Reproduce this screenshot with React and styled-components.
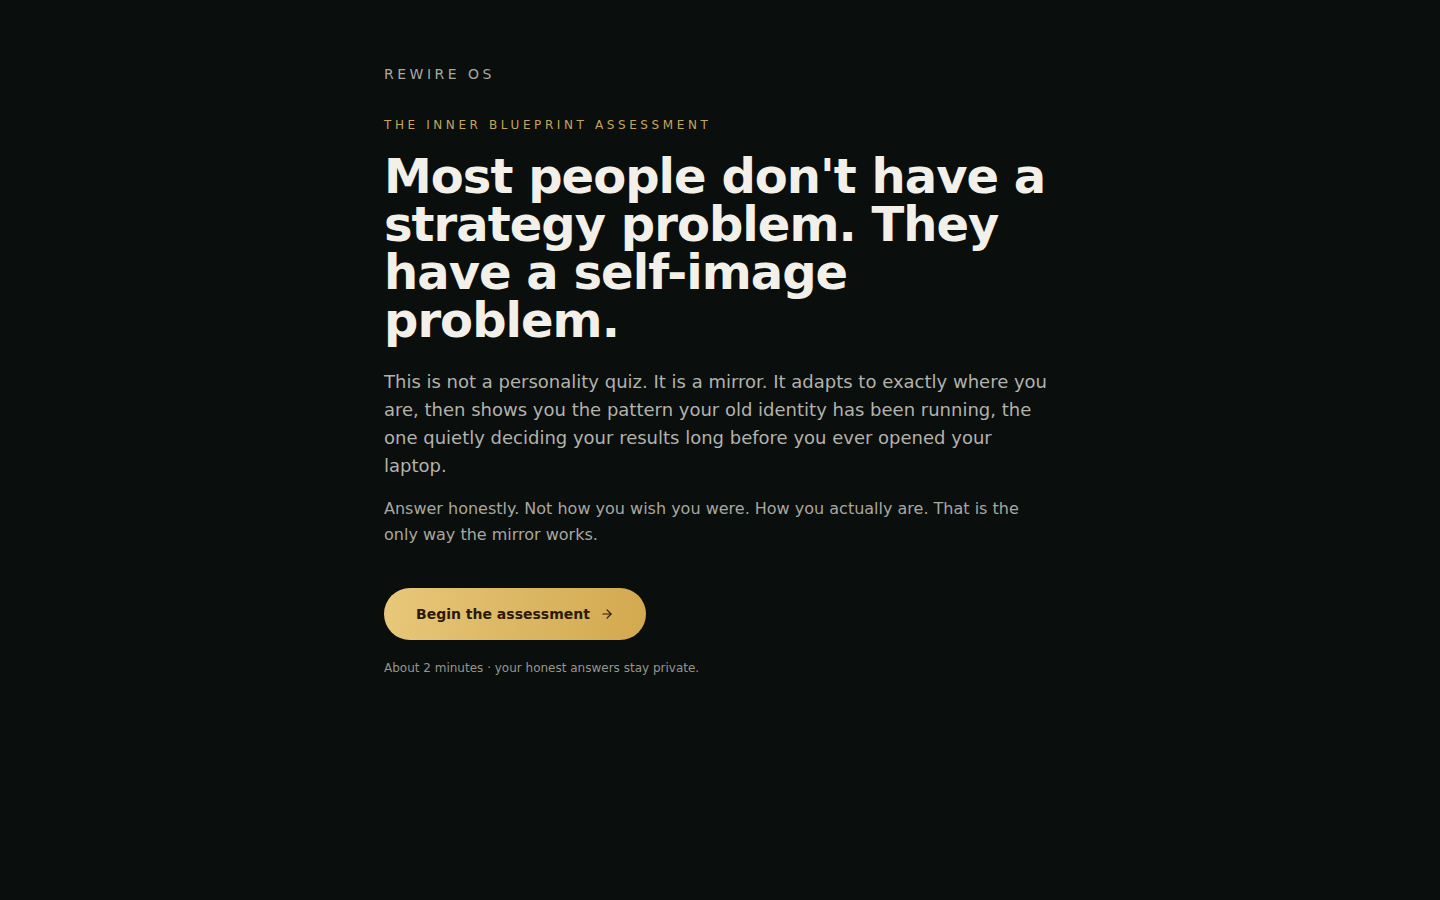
import React from "react";
import styled, { createGlobalStyle } from "styled-components";

const GlobalStyle = createGlobalStyle`
    html, body {
        margin: 0;
        padding: 0;
        background: #0a0e0c;
    }
    body {
        font-family: "DejaVu Sans", sans-serif;
        -webkit-font-smoothing: antialiased;
    }
`;

const Page = styled.main`
    min-height: 100vh;
    background: #0a0e0c;
`;

const Container = styled.div`
    max-width: 672px;
    margin: 0 auto;
    padding: 64px 0 80px;
`;

const Brand = styled.div`
    font-size: 14px;
    line-height: 20px;
    letter-spacing: 0.25em;
    color: #a9a9a2;
    text-transform: uppercase;
`;

const Eyebrow = styled.div`
    margin-top: 32px;
    font-size: 12px;
    line-height: 18px;
    letter-spacing: 0.3em;
    color: #c5a55c;
    text-transform: uppercase;
`;

const Headline = styled.h1`
    margin: 18px 0 0;
    font-size: 48px;
    line-height: 48px;
    font-weight: 700;
    color: #f2f0e8;
    letter-spacing: -0.02em;
`;

const Lead = styled.p`
    margin: 24px 0 0;
    font-size: 18px;
    line-height: 28px;
    color: #b3b2ab;
`;

const Note = styled.p`
    margin: 16px 0 0;
    font-size: 16px;
    line-height: 26px;
    color: #a8a7a0;
`;

const CTA = styled.button`
    margin-top: 40px;
    display: inline-flex;
    align-items: center;
    gap: 10px;
    height: 52px;
    padding: 0 32px;
    border: none;
    border-radius: 999px;
    background: linear-gradient(100deg, #e8c87a 0%, #dcb764 50%, #d3a94f 100%);
    color: #2b1a08;
    font-family: "DejaVu Sans", sans-serif;
    font-size: 14px;
    font-weight: 700;
    cursor: pointer;
`;

const Fine = styled.p`
    margin: 20px 0 0;
    font-size: 12px;
    line-height: 16px;
    color: #96958f;
`;

function Arrow() {
    return (
        <svg width="14" height="14" viewBox="0 0 24 24" fill="none" stroke="currentColor" strokeWidth="2" strokeLinecap="round" strokeLinejoin="round">
            <path d="M5 12h14" />
            <path d="M12 5l7 7-7 7" />
        </svg>
    );
}

export default function App() {
    return (
        <Page>
            <GlobalStyle />
            <Container>
                <Brand>Rewire OS</Brand>
                <Eyebrow>The Inner Blueprint Assessment</Eyebrow>
                <Headline>
                    Most people don't have a strategy problem. They have a self-image problem.
                </Headline>
                <Lead>
                    This is not a personality quiz. It is a mirror. It adapts to exactly where you are, then shows you the pattern your old identity has been running, the one quietly deciding your results long before you ever opened your laptop.
                </Lead>
                <Note>
                    Answer honestly. Not how you wish you were. How you actually are. That is the only way the mirror works.
                </Note>
                <CTA>
                    Begin the assessment
                    <Arrow />
                </CTA>
                <Fine>About 2 minutes · your honest answers stay private.</Fine>
            </Container>
        </Page>
    );
}
